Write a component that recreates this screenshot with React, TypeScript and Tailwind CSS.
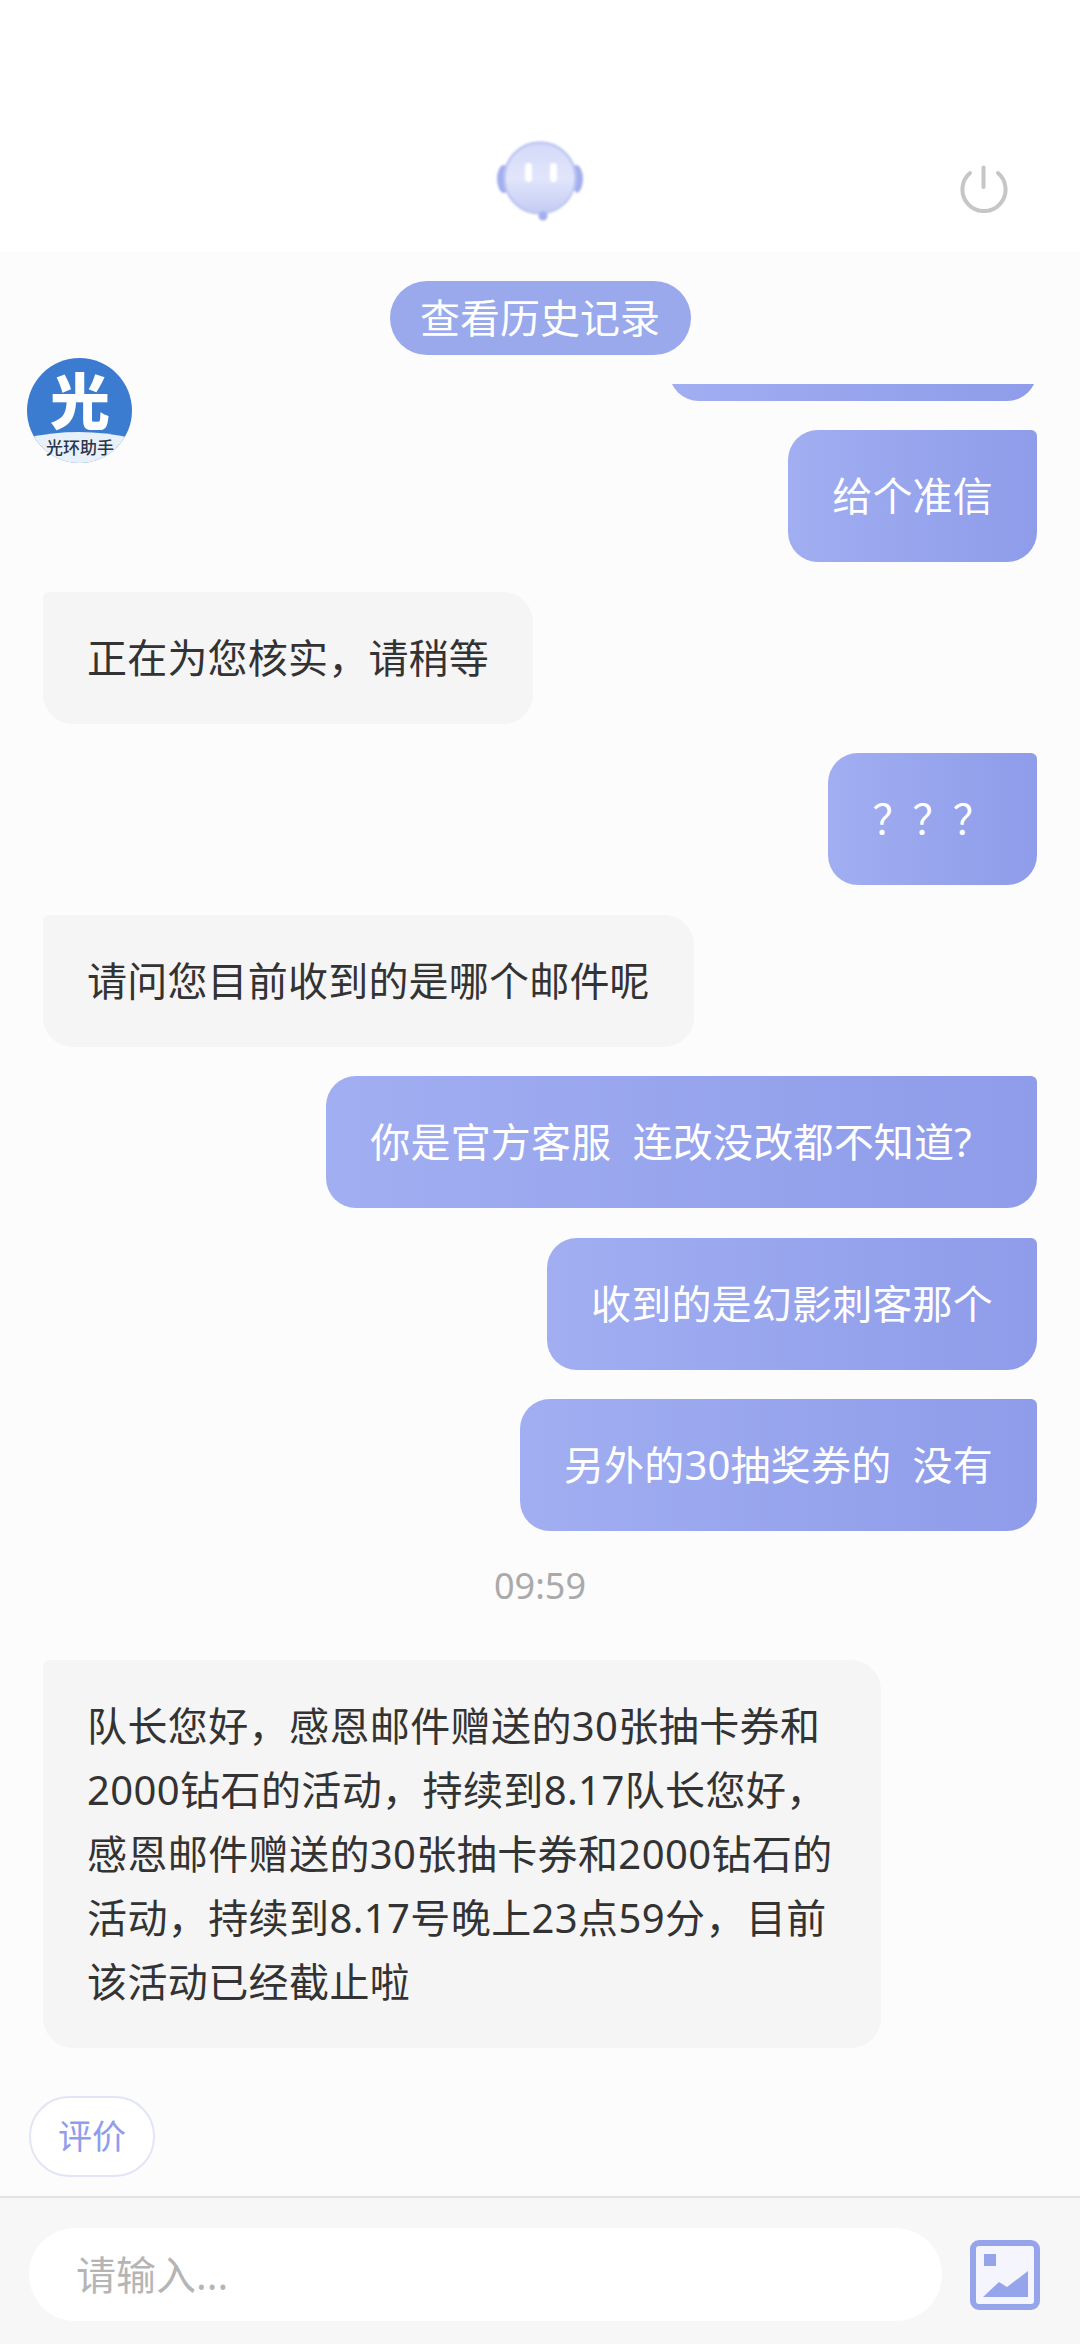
const FONT = "font-['Noto_Sans','Noto_Sans_CJK_SC',sans-serif]";

function RobotIcon() {
  return (
    <svg width="90" height="84" viewBox="0 0 90 84" className="blur-[1px]">
      <defs>
        <linearGradient id="face" x1="0" y1="0" x2="0" y2="1">
          <stop offset="0" stopColor="#d3d9f8" />
          <stop offset="0.5" stopColor="#e2e6fb" />
          <stop offset="1" stopColor="#c3cbf3" />
        </linearGradient>
      </defs>
      <ellipse cx="9" cy="40" rx="7" ry="14" fill="#a3afee" />
      <ellipse cx="81" cy="40" rx="7" ry="14" fill="#a3afee" />
      <circle cx="45" cy="39" r="35.5" fill="url(#face)" stroke="#bdc6f3" strokeWidth="2.5" />
      <rect x="30" y="24" width="7" height="19" rx="3" fill="#ffffff" />
      <rect x="55" y="24" width="7" height="19" rx="3" fill="#ffffff" />
      <path d="M80 52 C76 65 64 74 50 77" fill="none" stroke="#ffffff" strokeWidth="2.5" />
      <circle cx="48" cy="77" r="4.5" fill="#a3afee" />
    </svg>
  );
}

function PowerIcon() {
  return (
    <svg width="48" height="48" viewBox="0 0 48 48" fill="none" stroke="#c6c6c6" strokeWidth="4" strokeLinecap="round" className="blur-[0.5px]">
      <path d="M23.5 2.5 V22" />
      <path d="M10 8 A21.6 21.6 0 1 0 38 8" />
    </svg>
  );
}

function Logo() {
  return (
    <svg width="106" height="106" viewBox="0 0 106 106" className="block">
      <defs>
        <clipPath id="circ">
          <circle cx="53.5" cy="52.5" r="52.5" />
        </clipPath>
      </defs>
      <g clipPath="url(#circ)">
        <rect width="106" height="106" fill="#3b7bd0" />
        <path d="M0 80 Q53 68 106 80 V106 H0 Z" fill="#e8f0fa" />
      </g>
      <text x="54" y="66" textAnchor="middle" fontSize="60" fontWeight="900" fill="#ffffff" fontFamily="Noto Sans CJK SC, sans-serif">光</text>
      <text x="54" y="96" textAnchor="middle" fontSize="17" fontWeight="500" fill="#2b3648" fontFamily="Noto Sans CJK SC, sans-serif">光环助手</text>
    </svg>
  );
}

function ImageIcon() {
  return (
    <svg width="70" height="70" viewBox="0 0 70 70" className="blur-[0.3px]">
      <rect x="3" y="3" width="64" height="64" rx="6" fill="#f5f6fd" stroke="#96a4ec" strokeWidth="6" />
      <rect x="14" y="14" width="12" height="12" fill="#96a4ec" />
      <path d="M13 57 L29 42 L37 47 L58 31 V57 Z" fill="#96a4ec" />
    </svg>
  );
}

function UserBubble({ text, className = "" }: { text?: string; className?: string }) {
  return (
    <div className={`self-end shrink-0 whitespace-pre rounded-[30px] rounded-tr-[6px] bg-gradient-to-r from-[#a1aef1] to-[#8e9cea] px-[44px] py-[34px] text-[40px] leading-[64px] tracking-[0.2px] text-white ${className}`}>
      {text}
    </div>
  );
}

function AgentBubble({ children, className = "" }: { children: React.ReactNode; className?: string }) {
  return (
    <div className={`self-start shrink-0 whitespace-pre rounded-[30px] rounded-tl-[6px] bg-[#f5f5f5] px-[44px] py-[34px] text-[40px] leading-[64px] tracking-[0.2px] text-[#333333] ${className}`}>
      {children}
    </div>
  );
}

export default function App() {
  return (
    <div className={`relative flex h-[2344px] w-[1080px] flex-col overflow-hidden bg-[#fcfcfd] ${FONT}`}>
      <header className="grid h-[252px] shrink-0 grid-cols-3 items-start bg-white">
        <div />
        <div className="flex justify-center pt-[139px]">
          <RobotIcon />
        </div>
        <div className="flex justify-end pt-[165px] pr-[72px]">
          <PowerIcon />
        </div>
      </header>

      <main className="flex min-h-0 flex-1 flex-col">
        <button className="mt-[29px] h-[74px] w-[301px] shrink-0 self-center rounded-full bg-[#9aa8ec] text-[40px] leading-[74px] text-white">
          查看历史记录
        </button>

        <div className="absolute left-[26px] top-[358px] z-10">
          <Logo />
        </div>

        <div className="mt-[29px] flex h-[1664px] shrink-0 flex-col justify-end gap-[29.5px] overflow-hidden pl-[43px] pr-[43px]">
          <UserBubble className="h-[132px] w-[368px]" />
          <UserBubble text="给个准信" />
          <AgentBubble>正在为您核实，请稍等</AgentBubble>
          <UserBubble text="？？？" />
          <AgentBubble>请问您目前收到的是哪个邮件呢</AgentBubble>
          <UserBubble text="你是官方客服  连改没改都不知道?  " />
          <UserBubble text="收到的是幻影刺客那个" />
          <UserBubble text="另外的30抽奖券的  没有" />
          <div className="flex h-[70px] shrink-0 items-center justify-center pb-[20px] text-[36px] text-[#aaaaaa]">09:59</div>
          <AgentBubble className="w-[838px] tracking-[0.4px]">
            队长您好，感恩邮件赠送的30张抽卡券和
            <br />
            2000钻石的活动，持续到8.17队长您好，
            <br />
            感恩邮件赠送的30张抽卡券和2000钻石的
            <br />
            活动，持续到8.17号晚上23点59分，目前
            <br />
            该活动已经截止啦
          </AgentBubble>
        </div>

        <button className="ml-[29px] mt-[48px] h-[81px] w-[126px] shrink-0 rounded-[40px] border-2 border-[#e2e5f6] bg-white text-[34px] text-[#8f9dec]">
          评价
        </button>
      </main>

      <footer className="flex h-[148px] shrink-0 items-start border-t-2 border-[#e3e3e3] bg-[#f7f7f8] pl-[29px] pr-[40px] pt-[30px]">
        <div className="flex h-[93px] w-[913px] items-center rounded-full bg-white pl-[47px] text-[40px] text-[#b5b5b5]">
          请输入...
        </div>
        <div className="ml-auto mt-[12px]">
          <ImageIcon />
        </div>
      </footer>
    </div>
  );
}
